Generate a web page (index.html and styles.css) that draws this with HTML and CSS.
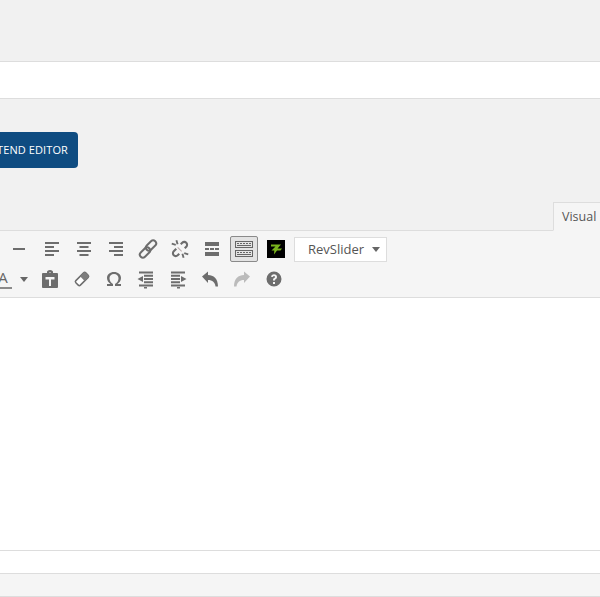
FILE: index.html
```html
<!DOCTYPE html>
<html lang="en">
<head>
<meta charset="utf-8">
<title>Editor</title>
<link rel="stylesheet" href="styles.css">
</head>
<body>
<div class="page">
  <div class="top"></div>
  <div class="title-input"></div>
  <div class="actions">
    <div class="btn-row"><a class="btn">FRONTEND EDITOR</a></div>
    <div class="tabs"><span class="tab">Visual</span></div>
  </div>
  <div class="toolbar">
    <div class="row row1">
      <svg class="ic" viewBox="0 0 20 20"><path d="M3 9h12v2H3z"/></svg>
      <svg class="ic" viewBox="0 0 20 20"><path d="M3 3h14v2H3zM3 7h9v2H3zM3 11h14v2H3zM3 15h9v2H3z"/></svg>
      <svg class="ic" viewBox="0 0 20 20"><path d="M3 3h14v2H3zM5.500 7h9v2h-9zM3 11h14v2H3zM5.500 15h9v2h-9z"/></svg>
      <svg class="ic" viewBox="0 0 20 20"><path d="M3 3h14v2H3zM8 7h9v2H8zM3 11h14v2H3zM8 15h9v2H8z"/></svg>
      <svg class="ic ic-line" viewBox="0 0 20 20"><rect x="10" y="0.500" width="6" height="12" rx="3" transform="rotate(45 13 6.500)"/><rect x="4" y="7.500" width="6" height="12" rx="3" transform="rotate(45 7 13.500)"/></svg>
      <svg class="ic" viewBox="0 0 20 20"><path d="M5.500 1.500l1.800-.5 1.200 4-1.800.5zM1.500 5.500 2 3.700l4 1.200-.5 1.800zM14.500 18.500l-1.800.5-1.200-4 1.800-.5zM18.500 14.500l-.5 1.800-4-1.200.5-1.800zM14.200 1.800c-1 0-2 .4-2.700 1.100L10 4.400l1.500 1.500 1.500-1.500c.7-.7 1.800-.7 2.500 0s.7 1.800 0 2.500l-1.500 1.500 1.500 1.500L17 8.400c1.500-1.500 1.500-3.900 0-5.400-.7-.8-1.800-1.200-2.800-1.200zM5.500 9.100 3 11.600c-1.500 1.500-1.500 3.900 0 5.400s3.900 1.500 5.400 0l1.600-1.500-1.500-1.500-1.500 1.500c-.7.7-1.800.7-2.500 0s-.7-1.800 0-2.500L7 10.600z"/><path class="spark" d="M8 8l4 4-.7.7-4-4z"/></svg>
      <svg class="ic" viewBox="0 0 20 20"><path d="M3 3h14v4H3zM3 9h4v2H3zM8 9h4v2H8zM13 9h4v2h-4zM3 13h14v4H3z"/></svg>
      <span class="kbd"><svg class="ic-kbd" viewBox="0 0 20 20"><path fill-rule="evenodd" d="M1 2h18v7H1zM2 3v5h16V3zM3 4h2v1H3zM6 4h2v1H6zM9 4h2v1H9zM12 4h2v1h-2zM15 4h2v1h-2zM3 6h14v1H3zM1 11h18v7H1zM2 12v5h16v-5zM3 13h2v1H3zM6 13h2v1H6zM9 13h2v1H9zM12 13h2v1h-2zM15 13h2v1h-2zM3 15h14v1H3z"/></svg></span>
      <svg class="zlogo" viewBox="0 0 18 18"><rect width="18" height="18"/><path class="zpath" d="M4 4.500h10L10.500 8.500H15l-1.500 2H10L7 14.500l.3-4H4.500L8.500 6.500H4z"/></svg>
      <div class="select"><span>RevSlider</span><i class="caret"></i></div>
    </div>
    <div class="row row2">
      <div class="color"><span class="a">A</span></div>
      <i class="caret caret-dark"></i>
      <svg class="ic" viewBox="0 0 20 20"><path fill-rule="evenodd" d="M7 4V3c0-1 1-2 3-2s3 1 3 2v1h4c.5 0 1 .5 1 1v13c0 .5-.5 1-1 1H3c-.5 0-1-.5-1-1V5c0-.5.500-1 1-1zM9 3.500V4h2v-.5zM5.500 8v2.500H9V17h2v-6.500h3.500V8z"/></svg>
      <svg class="ic ic-erase" viewBox="0 0 20 20"><rect class="er-body" x="3" y="6.800" width="14" height="6.400" rx="1.500" transform="rotate(-45 10 10)"/><rect class="er-top" x="10.500" y="6.800" width="6.500" height="6.400" rx="1" transform="rotate(-45 10 10)"/></svg>
      <svg class="ic" viewBox="0 0 20 20"><path d="M3 17v-2h3.500C4.500 13.700 3 11.500 3 9c0-3.500 3-6 7-6s7 2.500 7 6c0 2.500-1.500 4.700-3.500 6H17v2h-6v-2c2-1 3.500-3.200 3.500-5.800 0-2.500-1.800-4.200-4.500-4.200S5.500 6.700 5.500 9.200c0 2.600 1.500 4.800 3.500 5.800v2z"/></svg>
      <svg class="ic" viewBox="0 0 20 20"><path d="M3 2.500h14v2H3zM8 5.800h9v2H8zM8 9h9v2H8zM8 12.200h9v2H8zM3 15.500h14v2H3zM8 18h3v1.500H8zM7 7v6l-5.500-3z"/></svg>
      <svg class="ic" viewBox="0 0 20 20"><path d="M3 2.500h14v2H3zM3 5.800h9v2H3zM3 9h9v2H3zM3 12.200h9v2H3zM3 15.500h14v2H3zM9 18h3v1.500H9zM13 7v6l5.500-3z"/></svg>
      <svg class="ic" viewBox="0 0 20 20"><path d="M2 7.500 8 2.500V6c5.500 0 10 3.500 10 11.500h-2.500c-.5-4-3-6.500-7.500-6.500v3z"/></svg>
      <svg class="ic ic-redo" viewBox="0 0 20 20"><path d="M18 7.500 12 2.500V6C6.500 6 2 9.500 2 17.500h2.500c.5-4 3-6.500 7.500-6.500v3z"/></svg>
      <svg class="ic" viewBox="0 0 20 20"><path fill-rule="evenodd" d="M10 2.500a7.500 7.500 0 1 0 0 15 7.500 7.500 0 0 0 0-15zM9 13h2v2H9zM7 7.800C7.200 6.200 8.500 5.300 10 5.300c1.800 0 3 1 3 2.600 0 1.200-.8 1.800-1.500 2.300-.4.300-.5.600-.5 1.300H9c0-1.300.2-1.900 1-2.400.6-.4 1-.7 1-1.200 0-.6-.4-.9-1-.9s-1 .3-1.100 1z"/></svg>
    </div>
  </div>
  <div class="editor"></div>
  <div class="status"></div>
  <div class="footer"></div>
</div>
</body>
</html>
```
FILE: styles.css
```css
html, body {
  margin: 0;
  padding: 0;
  background: #fff;
}
.page {
  width: 600px;
  height: 597px;
  overflow: hidden;
  font-family: "Open Sans", "Noto Sans", sans-serif;
  display: flex;
  flex-direction: column;
}
.top {
  height: 61px;
  background: #f1f1f1;
  border-bottom: 1px solid #ddd;
  flex: none;
}
.title-input {
  height: 36px;
  background: #fff;
  border-bottom: 1px solid #ddd;
  flex: none;
}
.actions {
  height: 131px;
  background: #f1f1f1;
  flex: none;
  display: flex;
  flex-direction: column;
  justify-content: space-between;
}
.btn-row {
  padding-top: 33px;
  display: flex;
}
.btn {
  margin-left: -62px;
  width: 140px;
  height: 36px;
  box-sizing: border-box;
  background: #0f4c81;
  color: #fff;
  border-radius: 4px;
  font-size: 11px;
  letter-spacing: 0.1px;
  line-height: 36px;
  text-align: right;
  padding-right: 10px;
  white-space: nowrap;
}
.tabs {
  display: flex;
  justify-content: flex-end;
  margin-bottom: -1px;
}
.tab {
  margin-right: -14px;
  width: 61px;
  height: 29px;
  box-sizing: border-box;
  background: #f5f5f5;
  border: 1px solid #ddd;
  border-bottom-color: #f5f5f5;
  font-size: 12.500px;
  line-height: 27px;
  padding-left: 8px;
  color: #555;
  position: relative;
}
.toolbar {
  height: 68px;
  box-sizing: border-box;
  background: #f5f5f5;
  border-top: 1px solid #ddd;
  border-bottom: 1px solid #ddd;
  flex: none;
}
.row {
  display: flex;
  align-items: center;
}
.row1 {
  height: 36px;
  padding: 0 0 0 10px;
}
.row2 {
  height: 24px;
  padding: 0;
}
.ic {
  width: 20px;
  height: 20px;
  fill: #6d6d6d;
  flex: none;
  margin-right: 12px;
}
.ic-line {
  fill: none;
  stroke: #6d6d6d;
  stroke-width: 2;
}
.spark {
  fill: #b9a9a9;
}
.er-body {
  fill: #fff;
  stroke: #6d6d6d;
  stroke-width: 1.500;
}
.er-top {
  fill: #7d7d7d;
}
.kbd {
  width: 28px;
  height: 26px;
  box-sizing: border-box;
  border: 1px solid #8a8a8a;
  border-radius: 2px;
  background: #e3e3e3;
  display: flex;
  align-items: center;
  justify-content: center;
  margin: 0 9px 0 -4px;
  flex: none;
}
.ic-kbd {
  width: 20px;
  height: 20px;
  fill: #666;
}
.zlogo {
  width: 18px;
  height: 18px;
  flex: none;
  margin-right: 9px;
}
.zpath {
  fill: #7ab51d;
}
.select {
  width: 93px;
  height: 25px;
  box-sizing: border-box;
  background: #fff;
  border: 1px solid #ddd;
  display: flex;
  align-items: center;
  font-size: 13px;
  color: #555;
  padding-left: 13px;
  flex: none;
}
.select span {
  flex: 1;
}
.caret {
  width: 0;
  height: 0;
  border-left: 4px solid transparent;
  border-right: 4px solid transparent;
  border-top: 5px solid #666;
  margin-right: 6px;
  flex: none;
}
.color {
  width: 18px;
  height: 20px;
  margin-left: -6px;
  margin-right: 8px;
  border-bottom: 2px solid #8a8a8a;
  box-sizing: border-box;
  flex: none;
  text-align: center;
}
.a {
  font-size: 15px;
  line-height: 17px;
  color: #666;
  display: block;
}
.caret-dark {
  margin-right: 12px;
}
.ic-redo {
  fill: #bbb;
}
.editor {
  flex: none;
  height: 252px;
  background: #fff;
  border-bottom: 1px solid #ddd;
}
.status {
  flex: none;
  height: 22px;
  background: #fff;
  border-bottom: 1px solid #ddd;
}
.footer {
  flex: none;
  height: 22px;
  background: #f5f5f5;
  border-bottom: 1px solid #ddd;
}
```
